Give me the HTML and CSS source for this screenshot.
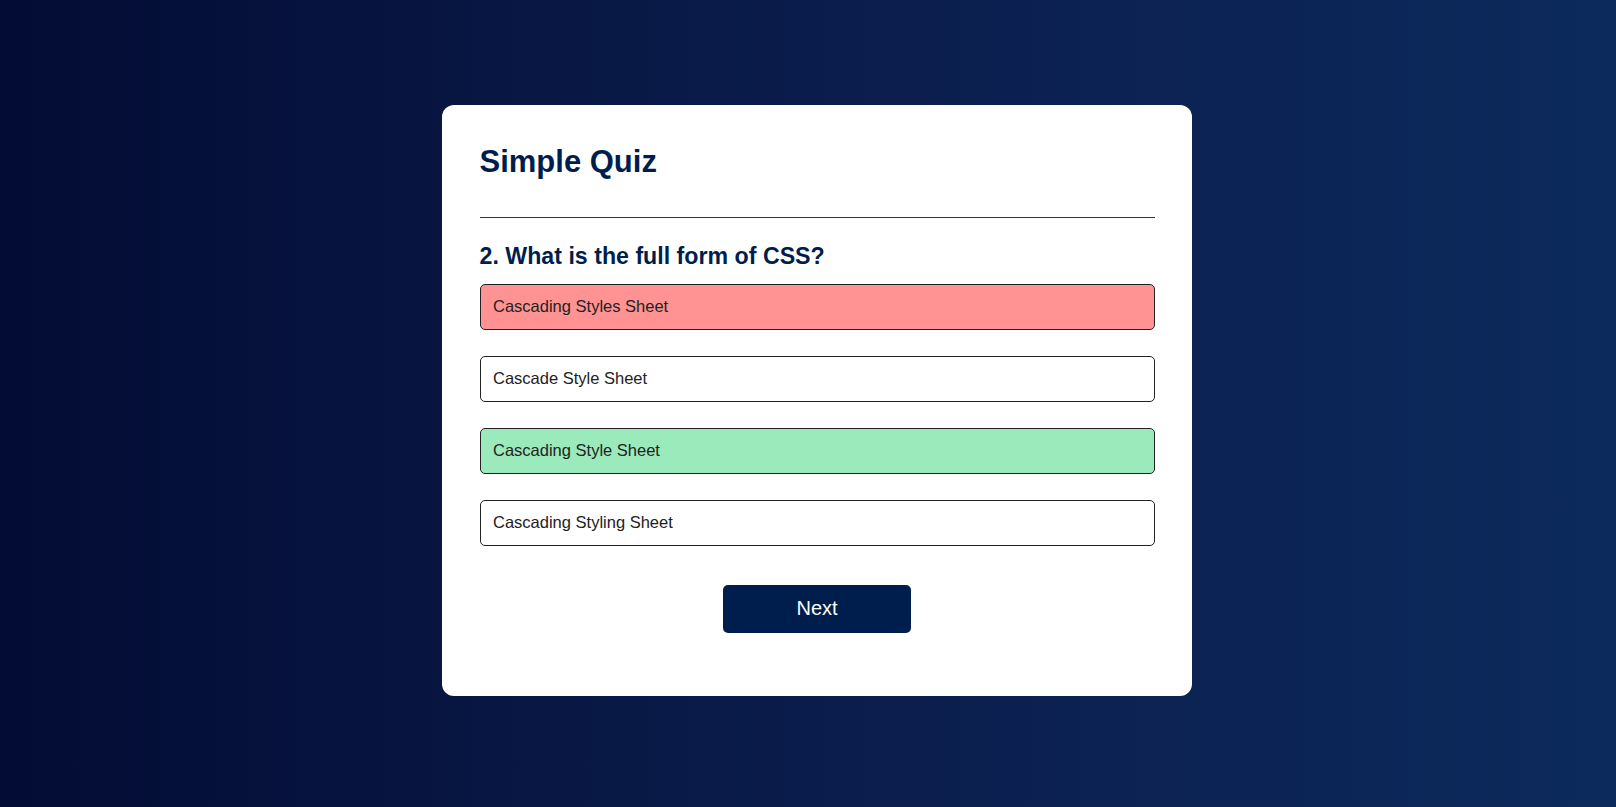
FILE: index.html
```html
<!DOCTYPE html>
<html lang="en">
<head>
<meta charset="utf-8">
<title>Simple Quiz</title>
<link rel="stylesheet" href="styles.css">
</head>
<body>
<div class="page">
  <div class="app">
    <h1>Simple Quiz</h1>
    <div class="quiz">
      <h2 class="question">2. What is the full form of CSS?</h2>
      <div class="answers">
        <button class="btn incorrect">Cascading Styles Sheet</button>
        <button class="btn">Cascade Style Sheet</button>
        <button class="btn correct">Cascading Style Sheet</button>
        <button class="btn">Cascading Styling Sheet</button>
      </div>
      <button class="next-btn">Next</button>
    </div>
  </div>
</div>
</body>
</html>
```

FILE: styles.css
```css
* {
  box-sizing: border-box;
}

html, body {
  margin: 0;
  padding: 0;
}

body {
  min-height: 100vh;
  background: linear-gradient(to right, #030c34, #0b1e4e 55%, #0c2a5c);
  font-family: "Liberation Sans", Arial, sans-serif;
}

.page {
  display: flex;
  justify-content: center;
  padding: 105px 0 0 18px;
}

.app {
  width: 750px;
  background: #fff;
  border-radius: 12px;
  padding: 37.5px;
}

.app h1 {
  margin: 1px 0 0;
  font-size: 31px;
  font-weight: 700;
  color: #001e4d;
  padding-bottom: 37px;
  border-bottom: 1px solid #333;
}

.quiz {
  padding: 25px 0;
}

.question {
  margin: 0;
  font-size: 23.2px;
  font-weight: 700;
  color: #001e4d;
}

.answers {
  display: flex;
  flex-direction: column;
  gap: 25.5px;
  margin-top: 14px;
}

.btn {
  display: block;
  width: 100%;
  background: #fff;
  color: #222;
  font-family: "Liberation Sans", Arial, sans-serif;
  font-size: 16.5px;
  line-height: 19.5px;
  text-align: left;
  border: 1px solid #222;
  border-radius: 5px;
  padding: 12.5px;
  cursor: pointer;
}

.btn.correct {
  background: #9aeabc;
}

.btn.incorrect {
  background: #ff9393;
}

.next-btn {
  display: block;
  width: 187.5px;
  margin: 38.5px auto 0;
  background: #001e4d;
  color: #fff;
  font-family: "Liberation Sans", Arial, sans-serif;
  font-size: 20px;
  line-height: 23.5px;
  border: 0;
  border-radius: 5px;
  padding: 12.5px;
  cursor: pointer;
}
```
